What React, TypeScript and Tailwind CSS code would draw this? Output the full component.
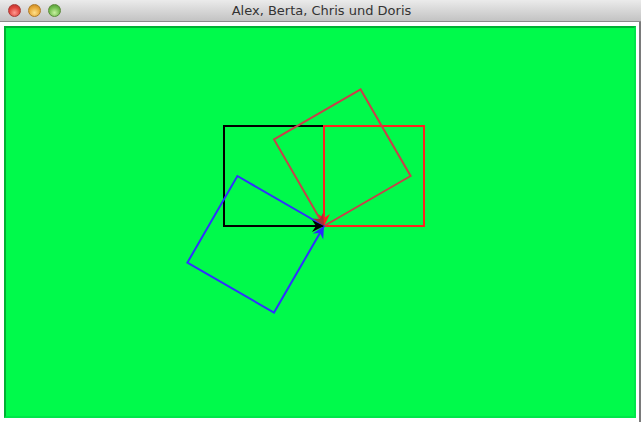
export default function App() {
  const cx = 318;
  const cy = 198;

  // turtle arrow head, pointing along heading (degrees, 0 = right, clockwise)
  const head = (angle: number) => `translate(${cx} ${cy}) rotate(${angle})`;

  return (
    <div className="w-[641px] h-[422px] flex flex-col bg-white overflow-hidden">
      {/* Title bar */}
      <div className="relative h-[22px] flex items-center bg-gradient-to-b from-[#ebebeb] to-[#c3c3c3] border-b border-[#8c8c8c]">
        <div className="flex items-center gap-[7px] pl-[8px]">
          <span className="w-[13px] h-[13px] rounded-full border border-[#a83a35] bg-[radial-gradient(circle_at_50%_70%,#ff9a8f,#e0443e_55%,#b52d28)]" />
          <span className="w-[13px] h-[13px] rounded-full border border-[#b07b25] bg-[radial-gradient(circle_at_50%_70%,#ffe08a,#e8a93a_55%,#bf7e1c)]" />
          <span className="w-[13px] h-[13px] rounded-full border border-[#5b8a3a] bg-[radial-gradient(circle_at_50%_70%,#c9f0a0,#74bd50_55%,#4a8f2c)]" />
        </div>
        <div
          className="absolute inset-0 flex items-center justify-center text-[13px] text-[#333333]"
          style={{ fontFamily: '"Lucida Grande", "DejaVu Sans", "Liberation Sans", sans-serif' }}
        >
          <span className="pl-[2px] pt-[1px]">Alex, Berta, Chris und Doris</span>
        </div>
      </div>

      {/* Body */}
      <div className="flex-1 pt-[4px] pl-[4px] border-r-2 border-[#7a7a7a]">
        <div className="w-[632px] h-[392px] border-2 border-t-[#00b034] border-l-[#00b034] border-b-[#00e64a] border-r-[#00e64a] bg-[#00fa4b]">
          <svg width="628" height="388" viewBox="0 0 628 388">
            <g fill="none" strokeWidth="2" strokeLinejoin="miter">
              <rect x="218" y="98" width="100" height="100" stroke="#000000" />
              <rect x="318" y="98" width="100" height="100" stroke="#ff2020" />
              <polygon points="318,198 404.6,148 354.6,61.4 268,111.4" stroke="#c8404a" />
              <polygon points="318,198 231.4,148 181.4,234.6 268,284.6" stroke="#3030ff" />
            </g>
            <g>
              <polygon points="0,0 -12,-6 -8,0 -12,6" fill="#ff2020" transform={head(90)} />
              <polygon points="0,0 -12,-6 -8,0 -12,6" fill="#a83038" transform={head(60)} />
              <polygon points="0,0 -12,-6 -8,0 -12,6" fill="#2828ff" transform={head(-60)} />
              <polygon points="0,0 -12,-6 -8,0 -12,6" fill="#000000" transform={head(0)} />
            </g>
          </svg>
        </div>
      </div>
    </div>
  );
}
